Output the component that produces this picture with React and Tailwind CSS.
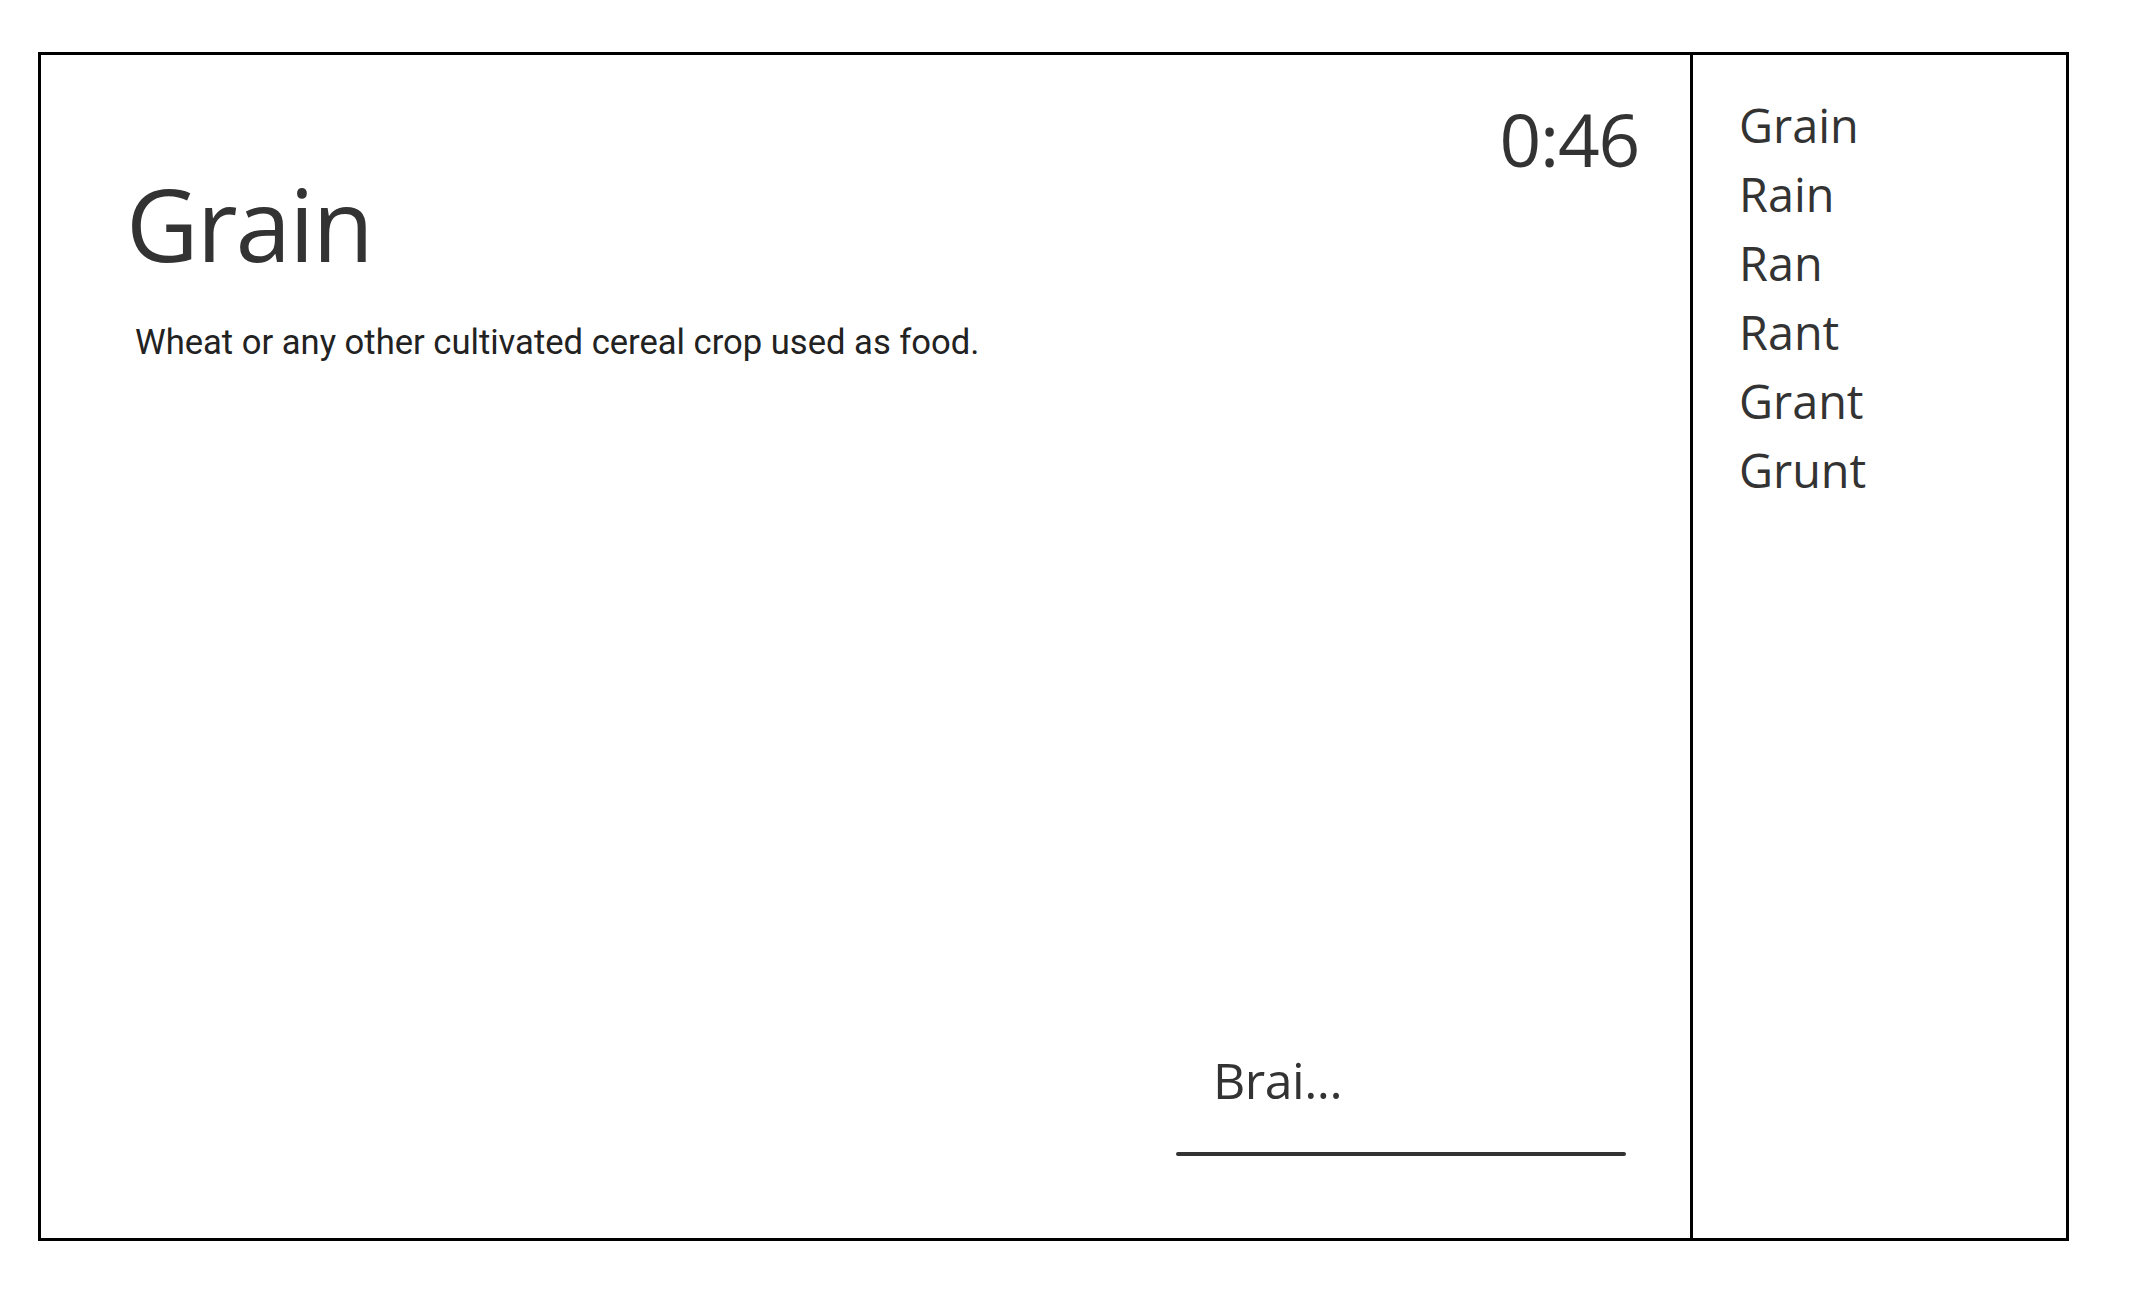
import React from 'react'

const words = ['Grain', 'Rain', 'Ran', 'Rant', 'Grant', 'Grunt']

const App = () => {
  return (
    <div className="w-[2130px] h-[1310px] bg-white pt-[52px] pl-[38px]">
      <div className="flex w-[2031px] h-[1189px] border-[3px] border-black">
        {/* game area */}
        <div className="flex-1 flex flex-col text-[#333]" style={{ fontFamily: '"Open Sans", sans-serif' }}>
          <div className="flex justify-end pt-[47px] pr-[51px]">
            <span className="text-[73px] leading-none tracking-[-1.2px]">0:46</span>
          </div>
          <h1 className="pl-[85px] -mt-[2px] text-[100px] leading-none font-normal tracking-[-2px]">Grain</h1>
          <p className="pl-[94px] mt-[52px] text-[34.6px] leading-none text-[#222]" style={{ fontFamily: 'Roboto, sans-serif' }}>
            Wheat or any other cultivated cereal crop used as food.
          </p>

          <div className="flex-1" />

          <div className="flex justify-end pr-[64px] pb-[82px]">
            <div className="w-[450px]">
              <div className="pl-[37px] text-[50px] leading-none tracking-[-0.5px]">Brai...</div>
              <div className="mt-[47px] h-[4px] rounded-full bg-[#333]" />
            </div>
          </div>
        </div>

        {/* found words */}
        <div className="w-[376px] border-l-[3px] border-black pt-[36px] pl-[46px] text-[#333]" style={{ fontFamily: '"Open Sans", sans-serif' }}>
          {words.map(w => (
            <div key={w} className="text-[46.8px] leading-[69px]">{w}</div>
          ))}
        </div>
      </div>
    </div>
  )
}

export default App
